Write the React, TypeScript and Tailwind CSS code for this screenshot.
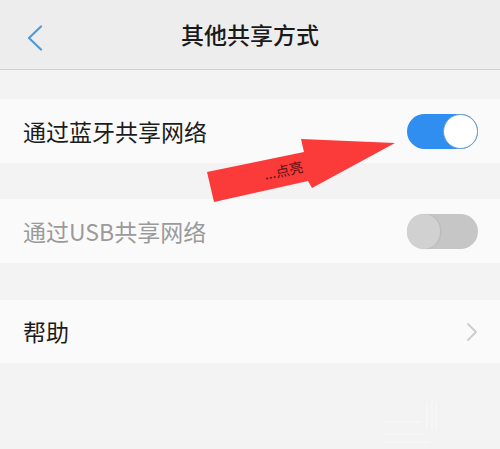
import React from "react";

const font = { fontFamily: '"Noto Sans CJK SC", "Noto Sans", sans-serif' };

function Toggle({ on }: { on: boolean }) {
  return on ? (
    <div className="relative h-[35px] w-[71px] rounded-full bg-[#2f8ef0]">
      <div className="absolute right-0 top-0 h-[35px] w-[35px] rounded-full border border-[#6f9fc5] bg-white" />
    </div>
  ) : (
    <div className="relative h-[35px] w-[71px] rounded-full bg-[#c6c6c6]">
      <div className="absolute left-0 top-0 h-[35px] w-[33px] rounded-full bg-[#d1d1d1] shadow-[1px_0_2px_rgba(0,0,0,0.08)]" />
    </div>
  );
}

export default function App() {
  return (
    <div className="relative h-[449px] w-[500px] overflow-hidden bg-[#f3f3f3]" style={font}>
      {/* Header */}
      <div className="relative flex h-[70px] items-center justify-center border-b border-[#cfcfcf] bg-[#ededed]">
        <svg className="absolute left-[26px] top-[25px]" width="18" height="26" viewBox="0 0 18 26">
          <path d="M15 1.5 L3 13 L15 24.5" fill="none" stroke="#4f9ad6" strokeWidth="2.2" strokeLinecap="round" strokeLinejoin="round" />
        </svg>
        <span className="text-[23px] font-medium leading-none text-[#1a1a1a]">其他共享方式</span>
      </div>

      <div className="h-[29px]" />
      <div className="flex h-[64px] items-center justify-between bg-[#fafafa] pl-[23px] pr-[22px]">
        <span className="text-[23px] leading-none text-[#1c1c1c]">通过蓝牙共享网络</span>
        <Toggle on />
      </div>

      <div className="h-[36px]" />
      <div className="flex h-[64px] items-center justify-between bg-[#fafafa] pl-[23px] pr-[22px]">
        <span className="text-[23px] leading-none text-[#9a9a9a]">通过USB共享网络</span>
        <Toggle on={false} />
      </div>

      <div className="h-[37px]" />
      <div className="flex h-[63px] items-center justify-between bg-[#fafafa] pl-[23px] pr-[22px]">
        <span className="text-[23px] leading-none text-[#1c1c1c]">帮助</span>
        <svg width="12" height="20" viewBox="0 0 12 20">
          <path d="M2 2 L10 10 L2 18" fill="none" stroke="#cccccc" strokeWidth="1.8" strokeLinecap="round" strokeLinejoin="round" />
        </svg>
      </div>

      {/* faint watermark lines */}
      <svg className="absolute left-0 top-0" width="500" height="449" viewBox="0 0 500 449">
        <g stroke="#ffffff" strokeWidth="1.5" opacity="0.35">
          <line x1="385" y1="422" x2="420" y2="422" />
          <line x1="383" y1="434" x2="424" y2="434" />
          <line x1="383" y1="442" x2="430" y2="442" />
          <line x1="427" y1="403" x2="427" y2="430" />
          <line x1="432" y1="400" x2="432" y2="430" />
          <line x1="436" y1="402" x2="436" y2="430" />
        </g>
        <polygon
          points="207,172 304,152 301,139 395,143 312,188 308,181 214,202"
          fill="#fb3a3a"
        />
      </svg>
      <div
        className="absolute left-[264px] top-[167px] text-[14px] leading-none text-[#5a1515]"
        style={{ transform: "rotate(-12deg)", transformOrigin: "left center" }}
      >
        ...点亮
      </div>
    </div>
  );
}
